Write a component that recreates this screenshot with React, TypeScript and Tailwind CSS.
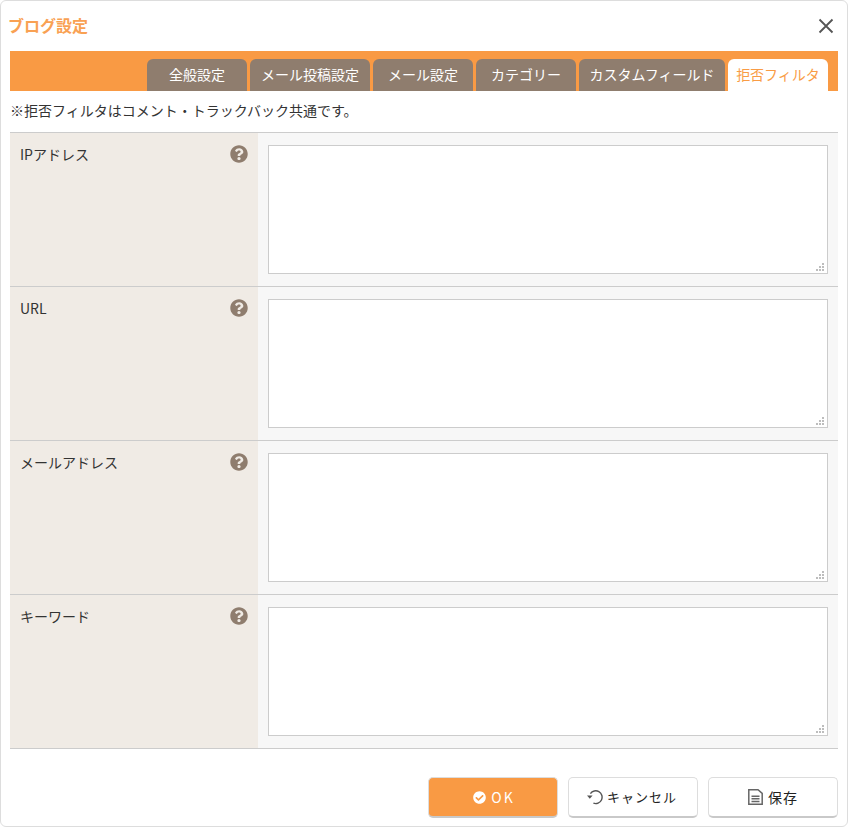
import React from "react";
import { FaCheckCircle, FaQuestionCircle } from "react-icons/fa";

const tabs = [
  { label: "全般設定", width: "w-[100px]" },
  { label: "メール投稿設定", width: "w-[120px]" },
  { label: "メール設定", width: "w-[100px]" },
  { label: "カテゴリー", width: "w-[100px]" },
  { label: "カスタムフィールド", width: "w-[146px]" },
];

const rows = ["IPアドレス", "URL", "メールアドレス", "キーワード"];

const Grip = () => (
  <svg className="absolute right-[3px] bottom-[2px]" width="9" height="9" viewBox="0 0 9 9" fill="#bdbdbd">
    <rect x="6" y="0" width="2" height="2" />
    <rect x="3" y="3" width="2" height="2" />
    <rect x="6" y="3" width="2" height="2" />
    <rect x="0" y="6" width="2" height="2" />
    <rect x="3" y="6" width="2" height="2" />
    <rect x="6" y="6" width="2" height="2" />
  </svg>
);

const FilterRow = ({ label }: { label: string }) => (
  <div className="grid grid-cols-[248px_1fr] h-[154px] border-b border-[#cccccc]">
    <div className="flex items-start justify-between bg-[#f0ebe5] pl-[10px] pr-[10px] pt-[11px]">
      <span className="text-[14px] leading-[20px] text-[#333333]">{label}</span>
      <FaQuestionCircle className="mt-[1px] text-[18px] text-[#8f7d6e]" />
    </div>
    <div className="bg-[#f7f7f7] pl-[10px] pr-[10px] pt-[12px]">
      <div className="relative h-[129px]">
        <textarea className="block w-full h-full resize-none bg-white border border-[#cccccc] outline-none" />
        <Grip />
      </div>
    </div>
  </div>
);

export default function App() {
  return (
    <div
      className="w-[848px] h-[827px] bg-white border border-[#dddddd] rounded-[6px] px-[9px] flex flex-col text-[#333333]"
      style={{ fontFamily: '"Noto Sans CJK JP", "Noto Sans", sans-serif' }}
    >
      <div className="h-[50px] flex items-center justify-between shrink-0">
        <h1 className="text-[16px] font-bold text-[#f9a153] -ml-[2px] -mt-[2px]">ブログ設定</h1>
        <svg className="mr-[4px]" width="16" height="16" viewBox="0 0 16 16" fill="none" stroke="#555555" strokeWidth="1.8">
          <path d="M1.5 1.5 14.5 14.5M14.5 1.5 1.5 14.5" />
        </svg>
      </div>

      <div className="h-[40px] bg-[#f99a44] flex items-end justify-end gap-[3px] pr-[10px] shrink-0">
        {tabs.map((tab) => (
          <div
            key={tab.label}
            className={`${tab.width} h-[32px] pb-[2px] rounded-t-[6px] bg-[#8f7d6e] text-white text-[14px] flex items-center justify-center`}
          >
            {tab.label}
          </div>
        ))}
        <div className="w-[100px] h-[32px] pb-[2px] rounded-t-[6px] bg-white text-[#f99c45] text-[14px] flex items-center justify-center">
          拒否フィルタ
        </div>
      </div>

      <p className="h-[41px] pb-[2px] flex items-center text-[14px] shrink-0">
        ※拒否フィルタはコメント・トラックバック共通です。
      </p>

      <div className="border-t border-[#cccccc]">
        {rows.map((label) => (
          <FilterRow key={label} label={label} />
        ))}
      </div>

      <div className="flex justify-end gap-[10px] mt-[28px]">
        <button className="w-[130px] h-[41px] pl-[2px] rounded-[5px] bg-[#f99a44] border border-[#dddddd] border-b-2 border-b-[#c9c9c9] text-white text-[14px] tracking-[2px] flex items-center justify-center gap-[5px]">
          <FaCheckCircle className="text-[13px]" />
          OK
        </button>
        <button className="w-[130px] h-[41px] pr-[2px] rounded-[5px] bg-white border border-[#dddddd] border-b-2 border-b-[#c9c9c9] text-[#222222] text-[13px] tracking-[1px] flex items-center justify-center gap-[4px]">
          <svg width="16" height="16" viewBox="0 0 16 16" fill="none" stroke="#555555" strokeWidth="1.4">
            <path d="M3.4 4.6A6.4 6.4 0 1 1 6.4 14.2" />
            <path d="M0 6.4 2.8 9.8 5.6 6.4Z" fill="#555555" stroke="none" />
          </svg>
          キャンセル
        </button>
        <button className="w-[130px] h-[41px] rounded-[5px] bg-white border border-[#dddddd] border-b-2 border-b-[#c9c9c9] text-[#222222] text-[14px] tracking-[1px] flex items-center justify-center gap-[5px]">
          <svg width="15" height="16" viewBox="0 0 15 16" fill="none" stroke="#666666" strokeWidth="1.5">
            <path d="M.8 .8H10L14.2 4.4V15.2H.8Z" />
            <path d="M3.5 7.2H11.5M3.5 9.8H11.5M3.5 12.4H11.5" strokeWidth="1.5" />
          </svg>
          保存
        </button>
      </div>
    </div>
  );
}
